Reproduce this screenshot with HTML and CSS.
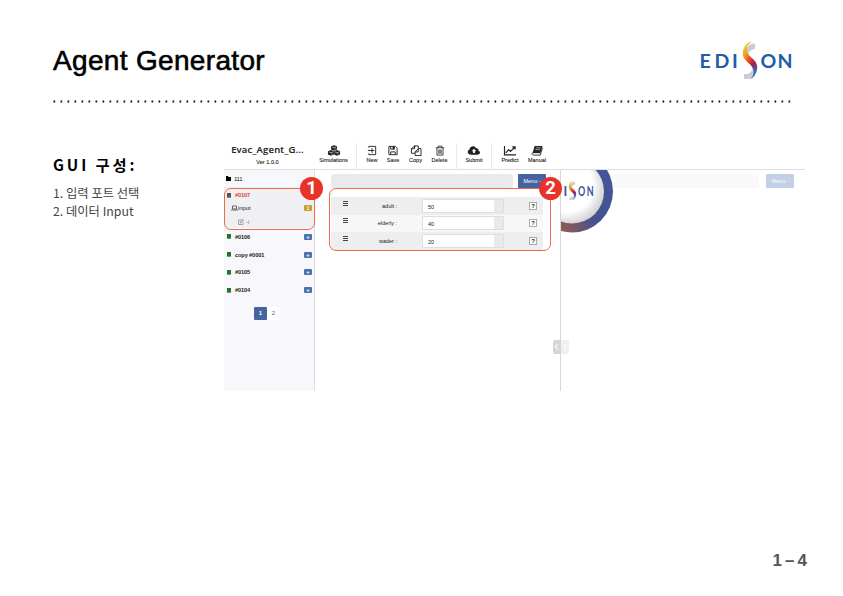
FILE: index.html
```html
<!DOCTYPE html>
<html lang="en">
<head>
<meta charset="utf-8">
<title>Agent Generator</title>
<link rel="stylesheet" href="styles.css">
</head>
<body>
<svg class="defs" width="0" height="0" aria-hidden="true">
  <defs>
    <linearGradient id="flame" x1="0" y1="0" x2=".5" y2="1">
      <stop offset="0" stop-color="#9fcf3c"/><stop offset=".15" stop-color="#e8cf35"/><stop offset=".38" stop-color="#f29222"/><stop offset=".6" stop-color="#e13a28"/><stop offset=".78" stop-color="#a11d5c"/><stop offset="1" stop-color="#2f6fb5"/>
    </linearGradient>
    <linearGradient id="ring" x1="0" y1="1" x2="1" y2=".3">
      <stop offset=".2" stop-color="#a65c42"/><stop offset=".58" stop-color="#43538f"/><stop offset="1" stop-color="#43569a"/>
    </linearGradient>
    <radialGradient id="disc" cx=".42" cy=".42" r=".58">
      <stop offset=".7" stop-color="#fff"/><stop offset="1" stop-color="#d6d6d8"/>
    </radialGradient>
    <symbol id="swoosh" viewBox="0 0 16 40">
      <path d="M13 2.500C8 2 4 6 4 11l2.500 6c-1-5 1.500-8.500 6.500-9z" fill="#cbccd0"/>
      <path d="M2 33c5 1 8-2 9-7l0-4 3 2c2 6-2 14-9 14H2z" fill="#cbccd0"/>
      <path d="M9 .5C3 2-1 10 1.500 16c2 5 8.500 7 10 13 .5 4-.5 7-3.500 9.500C13.500 36 16 29 15 24 13 17 6 16 5 10 4.500 6 5.500 3 9 1.500z" fill="url(#flame)"/>
    </symbol>
  </defs>
</svg>
<main class="slide">
  <header class="slide-head">
    <h1>Agent Generator</h1>
    <svg class="logo" width="94" height="42" viewBox="0 0 94 42">
      <g fill="#235ca6" font-size="19.5" font-weight="700">
        <text x="-.5 14.500 32">EDI</text><text x="60.500 77.500">ON</text>
      </g>
      <use href="#swoosh" x="42" y="0" width="16" height="40"/>
    </svg>
  </header>
  <svg class="dots" width="740" height="3"><path d="M.5 1.500H738" stroke="#111" stroke-width="1.800" stroke-dasharray="1.700 5.300"/></svg>
  <section class="content">
    <aside class="notes">
      <h2>GUI 구성:</h2>
      <ol><li>1. 입력 포트 선택</li><li>2. 데이터 Input</li></ol>
    </aside>
    <div class="app">
      <div class="topbar">
        <div class="brand"><b>Evac_Agent_G...</b><span>Ver 1.0.0</span></div>
        <nav class="tools">
          <div class="tool sim sep"><svg viewBox="0 0 14 12"><path d="M7 .2l3.200 1.200v3.400L7 6.200 3.800 4.800V1.400zM3.700 5.500l3.200 1.300v3.500l-3.200 1.400-3.300-1.400V6.800zM10.300 5.500l3.300 1.300v3.500l-3.300 1.400-3.200-1.400V6.800z" fill="#222"/><path d="M4.800 2.200L7 3l2.200-.8M1.300 7.500l2.400.9 2.400-.9M8 7.500l2.300.9 2.400-.9M8 3.600v1.500M4.700 9v1.500M11.300 9v1.500" class="cut"/></svg>Simulations</div>
          <div class="tool new"><svg class="line" viewBox="0 0 12 12"><path d="M2.500 3V1.500H10v9H2.500V9M6 3.500v5M1.500 6h7"/></svg>New</div>
          <div class="tool save"><svg class="line" viewBox="0 0 12 12"><path d="M1.500 1.500h7l2 2v7h-9zM3.500 1.500v3h4v-3M3.500 10.500v-3h5v3"/><path d="M6 2h1v2H6z" fill="#222"/></svg>Save</div>
          <div class="tool copy"><svg class="line" viewBox="0 0 12 12"><path d="M4.500 3V1h4v3M4.500 1L1 4v5h4M4.500 1v3H1M8.500 4h3v7.500H5V7.500L8.500 4v3.500H5"/></svg>Copy</div>
          <div class="tool del"><svg class="line" viewBox="0 0 12 12"><path d="M1.500 3h9M4 3V1.200h4V3M2.700 3v8h6.600V3M4.700 5v4.500M6 5v4.500M7.300 5v4.500" stroke-width=".9"/></svg>Delete</div>
          <div class="tool submit sep sepl"><svg viewBox="0 0 14 12"><path d="M4 10.500C-1 10.500-.5 5.500 2 5.200 2 1 8 0 9.200 3.500c2-.4 3 1 2.600 2.500C14.500 7 14 10.500 11 10.500z" fill="#222"/><path d="M7 4L4.500 6.800H6v2h2v-2h1.500z" fill="#fff"/></svg>Submit</div>
          <div class="tool predict"><svg class="line" viewBox="0 0 14 12"><path d="M1 1v9.800h12.500M2.500 8.500L5.500 5l2 2L12 2.500M9.500 2h3v3" stroke-width="1.300"/></svg>Predict</div>
          <div class="tool manual"><svg viewBox="0 0 14 12"><path d="M4.500 1h8.500l-2.500 8H2z" fill="#222"/><path d="M2 8.500c-1 1 0 2.500 1 2.500h7.500l2.500-8" fill="none" stroke="#222"/><path d="M6 3h5M5.300 5h5M3 9.600h7" class="cut"/></svg>Manual</div>
        </nav>
      </div>
      <div class="panes">
        <aside class="side">
          <div class="folder"><svg width="5" height="5" viewBox="0 0 5 5"><path d="M0 0h2.300v1H5v4H0z"/></svg>111</div>
          <div class="active">
            <div class="job"><i class="doc grey"></i><span class="red">#0107</span></div>
            <div class="port"><svg width="7" height="6" viewBox="0 0 7 6"><path d="M1.500 1h4v3h-4zM0 5h7" fill="none" stroke="#444" stroke-width=".8"/></svg><span>input</span><em class="tag gold">1</em></div>
            <div class="file"><svg width="6" height="6" viewBox="0 0 6 6"><path d="M4 1H.5v4.500H5V3M2 4l.3-1L5 .5l.6.600L3 3.700z" fill="none" stroke="#777" stroke-width=".6"/></svg>-i</div>
          </div>
          <div class="job"><i class="doc"></i>#0106<em class="tag">+</em></div>
          <div class="job"><i class="doc"></i>copy #0001<em class="tag">+</em></div>
          <div class="job"><i class="doc"></i>#0105<em class="tag">+</em></div>
          <div class="job"><i class="doc"></i>#0104<em class="tag">+</em></div>
          <div class="pages"><b>1</b><span>2</span></div>
          <div class="callout one"><strong>1</strong></div>
        </aside>
        <section class="center">
          <div class="bar"><div class="search"></div><div class="menu">Menu -</div></div>
          <div class="fields">
            <div class="field"><i class="grip"></i><label>adult :</label><div class="box"><span>50</span></div><b class="help">?</b></div>
            <div class="field light"><i class="grip"></i><label>elderly :</label><div class="box"><span>40</span></div><b class="help">?</b></div>
            <div class="field"><i class="grip"></i><label>wader :</label><div class="box"><span>20</span></div><b class="help">?</b></div>
          </div>
          <div class="callout two"><strong>2</strong></div>
          <div class="handle"><svg width="16" height="14" viewBox="0 0 16 14"><path d="M4.500 4.500L2.500 7l2 2.500M11 4.500L13 7l-2 2.500" fill="none" stroke="#fff" stroke-width="1.200"/></svg></div>
        </section>
        <section class="right">
          <svg class="emblem" width="54" height="64" viewBox="561 170 54 64">
            <circle cx="572" cy="191.500" r="41" fill="url(#ring)"/>
            <circle cx="572" cy="191.500" r="32" fill="url(#disc)"/>
            <g fill="#36559a" font-size="12.500" font-weight="700">
              <text x="563.500" y="195.500">I</text><text transform="translate(578 195.500) scale(.72 1)" letter-spacing="2">ON</text>
            </g>
            <use href="#swoosh" x="568" y="180.500" width="9" height="20.500"/>
          </svg>
          <div class="bar"><div class="search"></div><div class="menu">Menu -</div></div>
        </section>
      </div>
    </div>
  </section>
  <footer>1<span>–</span>4</footer>
</main>
</body>
</html>
```
FILE: styles.css
```css
* { box-sizing: border-box; }
body { margin: 0; background: #fff; font-family: "Liberation Sans", "Noto Sans CJK KR", sans-serif; }
.defs { display: block; }
.slide { width: 843px; height: 596px; overflow: hidden; display: flex; flex-direction: column; padding: 41px 36px 0 53px; }
.slide-head { display: flex; justify-content: space-between; height: 58px; }
h1 { margin: 3px 0 0; font-size: 28px; line-height: 34px; font-weight: 400; letter-spacing: .33px; -webkit-text-stroke: .6px #000; }
.logo { margin-right: 13px; font-family: Lato, sans-serif; flex: none; }
.logo text { transform: translateY(27px); }
.dots { display: block; margin-top: 1px; }
.content { display: flex; margin-top: 40px; height: 410px; }
.notes { width: 171px; font-family: "Noto Sans CJK KR", sans-serif; }
h2 { margin: 9px 0 0; font-size: 15.3px; line-height: 24px; letter-spacing: 2.9px; font-weight: 700; white-space: nowrap; }
ol { list-style: none; margin: 8px 0 0; padding: 0; font-size: 12.3px; line-height: 18px; color: #444; }
.app { width: 581px; height: 248px; font-size: 5.5px; color: #222; font-family: "Liberation Sans", sans-serif; }
.topbar { display: flex; height: 27px; border-bottom: 1px solid #dedee1; }
.brand { width: 87px; display: flex; flex-direction: column; align-items: center; font-size: 5.6px; -webkit-text-stroke: .1px; }
.brand b { font: 600 9.5px/13px "Open Sans", sans-serif; letter-spacing: .17px; }
.brand span { line-height: 12px; }
.tools { display: flex; }
.tool { flex: none; display: flex; flex-direction: column; align-items: center; line-height: 6px; -webkit-text-stroke: .1px #222; }
.tool svg { width: 14px; height: 11px; margin: 2px 0 1px; stroke-width: 1; }
.tool svg.line { fill: none; stroke: #222; }
.tool svg .cut { fill: none; stroke: #fff; stroke-width: .6; }
.sim { width: 46px; }
.new { width: 22px; margin-left: 4px; }
.save { width: 20px; }
.copy { width: 25px; }
.del { width: 23px; margin-right: 5px; }
.submit { width: 36px; }
.predict { width: 26px; margin-left: 5px; }
.manual { width: 28px; }
.sep { border-right: 1px solid #ebebed; }
.sepl { border-left: 1px solid #ebebed; }
.panes { display: flex; height: 221px; }
.side { position: relative; width: 91px; background: #f8f8fc; border-right: 1px solid #dddde3; }
.folder { display: flex; gap: 3px; height: 17px; padding: 0 2px; align-items: center; font-size: 6px; letter-spacing: -.3px; }
.active { height: 41px; padding-top: 1px; background: #f0f0f2; }
.job { display: flex; align-items: center; height: 17.8px; padding: 0 2px 0 3px; gap: 4px; font-size: 5.6px; font-weight: 700; letter-spacing: -.1px; }
.active .job { height: 14px; }
.red { color: #cf4740; }
.doc { width: 4px; height: 5px; background: #26752b; border-bottom: 1px solid #63a365; }
.doc.grey { background: #555; border-color: #888; }
.tag { margin-left: auto; width: 8px; height: 6px; border-radius: 1px; background: #4c73ad; color: #fff; font: 700 6px/6px "Liberation Sans", sans-serif; text-align: center; }
.tag.gold { background: #cb9a30; font-size: 5px; }
.port { display: flex; align-items: center; height: 12px; padding: 0 2px 0 7px; font-size: 5.8px; }
.file { display: flex; align-items: center; gap: 2px; height: 15px; padding-left: 14px; font-size: 6px; color: #777; }
.pages { display: flex; width: 26px; height: 13px; margin: 8px 0 0 30px; background: #fff; font-size: 6px; line-height: 13px; text-align: center; color: #4864a2; }
.pages b { width: 13px; background: #4664a1; color: #fff; border-radius: 1px; }
.pages span { flex: 1; }
.center { position: relative; width: 246px; padding: 4px 14px 0 16px; border-right: 1px solid #d8d8da; }
.bar { display: flex; height: 14px; gap: 5px; }
.search { width: 182px; background: #eaeaea; border-radius: 2px; }
.menu { width: 28px; border-radius: 1px; background: #4563a1; color: #fff; font-size: 5.5px; line-height: 14px; text-align: center; }
.fields { width: 212px; margin-top: 9px; }
.field { display: flex; align-items: center; height: 17.6px; background: #eee; }
.field.light { background: #f8f7f8; }
.grip { width: 5px; height: 5px; margin: -5px 0 0 12px; border: solid #444; border-width: 1px 0; background: linear-gradient(#444, #444) center / 100% 1px no-repeat; }
.field label { width: 49px; text-align: right; }
.box { display: flex; width: 82px; height: 14px; margin-left: 25px; background: #e9e9e9; border: 1px solid #dedede; border-radius: 1px; }
.box span { width: 71px; background: #fff; padding-left: 5px; line-height: 14px; }
.help { width: 8px; height: 8px; margin-left: 25px; border: 1px solid #aaa; background: #fff; font-size: 6px; line-height: 7px; text-align: center; }
.callout { position: absolute; z-index: 2; border: 1.3px solid #ef6a48; border-radius: 7px; }
.callout strong { position: absolute; top: -12.5px; width: 23px; height: 23px; border-radius: 50%; background: #e8332a; color: #fff; font: 700 18.5px/23px Roboto, sans-serif; text-align: center; }
.one { left: 0; top: 18px; width: 91px; height: 42px; }
.one strong { right: -9px; }
.two { left: 14px; top: 18px; width: 222px; height: 63px; }
.two strong { right: -12px; }
.handle { position: absolute; z-index: 1; right: -9px; top: 170px; width: 16px; height: 14px; border-radius: 2px; background: linear-gradient(90deg, #d6d6d6 50%, #efefef 50%); }
.handle svg { display: block; }
.right { position: relative; width: 244px; padding: 4px 0 0 1px; }
.emblem { position: absolute; left: 0; top: 0; font-family: Lato, sans-serif; }
.right .bar { gap: 7px; }
.right .search { width: 197px; background: #f9f9f9; }
.right .menu { background: #c3cfe4; }
footer { margin-top: -2px; color: #555; align-self: flex-end; font: 700 17px/20px "Liberation Sans", sans-serif; display: flex; gap: 3px; }
```
